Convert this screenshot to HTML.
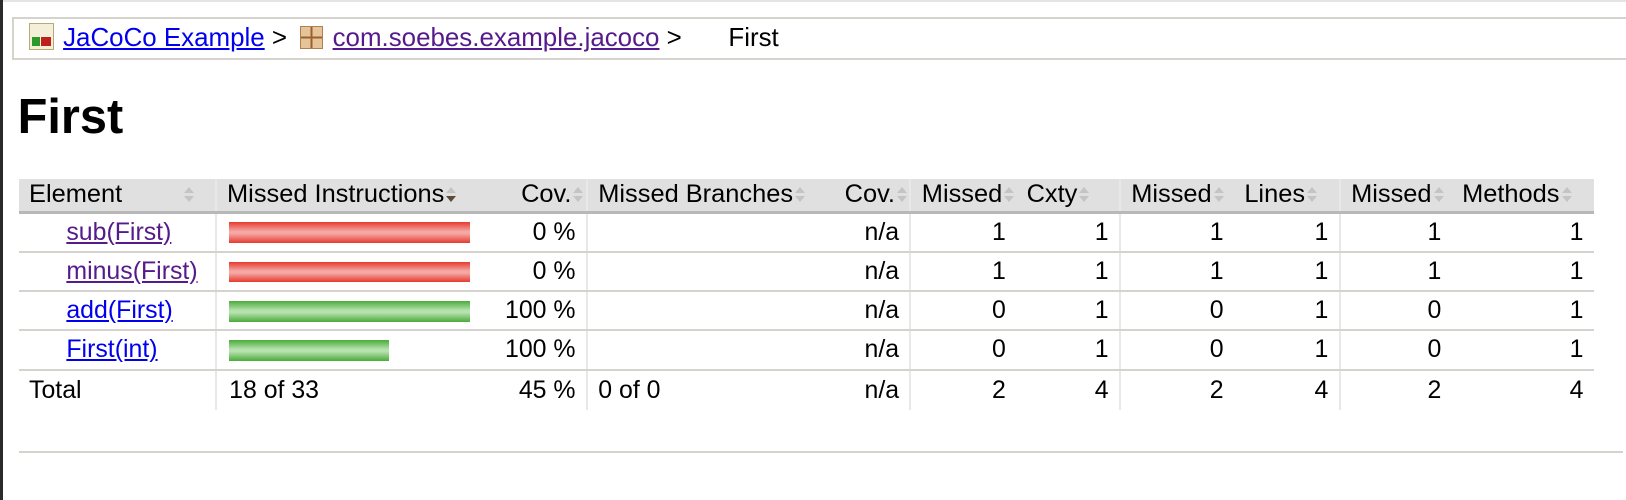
<!DOCTYPE html>
<html><head><style>
body{margin:0;width:1626px;height:500px;overflow:hidden;background:#fff;font-family:"Liberation Sans",Arial,sans-serif;position:relative}
.lb{position:absolute;left:0;top:0;width:3px;height:500px;background:#2b2b2b;z-index:2}
.tb{position:absolute;left:3px;top:0;width:1623px;height:2px;background:#e4e4e4}
.wrap{position:absolute;left:0;top:0;width:1568px;height:482px;zoom:1.037}
.bc{position:absolute;left:12px;top:16px;width:1640px;height:38px;border:2px solid #d6d3ce;border-right:none;font-size:25px;line-height:38px;color:#000;white-space:nowrap}
.bc a{color:#00e}
.bc a.v{color:#551a8b}
h1{position:absolute;left:17px;top:86px;margin:0;font-size:47px;font-weight:bold}
table{position:absolute;left:18px;top:173px;border-collapse:collapse;font-size:24px;width:1519px;table-layout:fixed}
th{background:#e0e0e0;font-weight:normal;height:30px;border-bottom:3px solid #b8b8b8;padding:0 2px 0 10px;white-space:nowrap;overflow:hidden;font-size:24.5px}
td{height:36px;border-bottom:2px solid #d6d3ce;padding:0 10px;white-space:nowrap;line-height:36px}
tr.t td{border-bottom:none;height:38px}
.r{text-align:right}.l{text-align:left}
.s{border-left:2px solid #e8e8e8}
.i{display:inline-block;width:10px;height:16px;vertical-align:-1px;margin-left:2px;position:relative}
.i:before{content:"";position:absolute;left:0;top:0;border:5px solid transparent;border-bottom:6px solid #c4c4c4;border-top:0}
.i:after{content:"";position:absolute;left:0;top:9px;border:5px solid transparent;border-top:6px solid #c4c4c4;border-bottom:0}
.i.d:after{border-top-color:#5b4a3c}
td a{color:#00e}td a.v{color:#551a8b}
.bar{height:20px;display:block;margin-top:1px}
.red{background:linear-gradient(#e53a2e,#f5a8a4 45%,#f5a8a4 55%,#e53a2e)}
.grn{background:linear-gradient(#4aaa3a,#b7e2ae 45%,#b7e2ae 55%,#4aaa3a)}
.hr{position:absolute;left:18px;top:435px;width:1547px;height:2px;background:#d6d3ce}
</style></head><body>
<div class="lb"></div><div class="tb"></div>
<div class="wrap">
<div class="bc"><span style="display:inline-block;width:22px;height:24px;margin:0 9px 0 14px;vertical-align:-4px;position:relative;background:#f3efd8;border:1px solid #b9a878"><span style="position:absolute;left:2px;top:13px;width:8px;height:8px;background:#2a9a2a"></span><span style="position:absolute;left:11px;top:13px;width:9px;height:8px;background:#c0201c"></span></span><a href="#">JaCoCo Example</a> &gt; <span style="display:inline-block;width:22px;height:22px;margin:0 9px 0 6px;vertical-align:-3px;background:#e6c49a;border:1px solid #b08050;box-sizing:border-box;background-image:linear-gradient(90deg,transparent 9px,#9a6030 9px,#9a6030 11px,transparent 11px),linear-gradient(transparent 9px,#9a6030 9px,#9a6030 11px,transparent 11px)"></span><a class="v" href="#">com.soebes.example.jacoco</a> &gt; <span style="margin-left:38px">First</span></div>
<h1>First</h1>
<table>
<colgroup><col style="width:190px"><col style="width:248px"><col style="width:110px"><col style="width:224px"><col style="width:88px"><col style="width:102px"><col style="width:100px"><col style="width:110px"><col style="width:102px"><col style="width:108px"><col></colgroup>
<tr><th class="l">Element<span class="i" style="margin-left:60px"></span></th><th class="l s">Missed Instructions<span class="i d"></span></th><th class="r">Cov.<span class="i"></span></th><th class="l s">Missed Branches<span class="i"></span></th><th class="r">Cov.<span class="i"></span></th><th class="l s">Missed<span class="i"></span></th><th class="l">Cxty<span class="i"></span></th><th class="l s">Missed<span class="i"></span></th><th class="l">Lines<span class="i"></span></th><th class="l s">Missed<span class="i"></span></th><th class="l">Methods<span class="i"></span></th></tr>
<tr><td style="padding-left:46px"><a class="v" href="#">sub(First)</a></td><td class="s" style="padding-left:12px"><span class="bar red" style="width:232px"></span></td><td class="r">0 %</td><td class="s"></td><td class="r">n/a</td><td class="r s">1</td><td class="r">1</td><td class="r s">1</td><td class="r">1</td><td class="r s">1</td><td class="r">1</td></tr>
<tr><td style="padding-left:46px"><a class="v" href="#">minus(First)</a></td><td class="s" style="padding-left:12px"><span class="bar red" style="width:232px"></span></td><td class="r">0 %</td><td class="s"></td><td class="r">n/a</td><td class="r s">1</td><td class="r">1</td><td class="r s">1</td><td class="r">1</td><td class="r s">1</td><td class="r">1</td></tr>
<tr><td style="padding-left:46px"><a href="#">add(First)</a></td><td class="s" style="padding-left:12px"><span class="bar grn" style="width:232px"></span></td><td class="r">100 %</td><td class="s"></td><td class="r">n/a</td><td class="r s">0</td><td class="r">1</td><td class="r s">0</td><td class="r">1</td><td class="r s">0</td><td class="r">1</td></tr>
<tr><td style="padding-left:46px"><a href="#">First(int)</a></td><td class="s" style="padding-left:12px"><span class="bar grn" style="width:154px"></span></td><td class="r">100 %</td><td class="s"></td><td class="r">n/a</td><td class="r s">0</td><td class="r">1</td><td class="r s">0</td><td class="r">1</td><td class="r s">0</td><td class="r">1</td></tr>
<tr class="t"><td>Total</td><td class="s" style="padding-left:12px">18 of 33</td><td class="r">45 %</td><td class="s">0 of 0</td><td class="r">n/a</td><td class="r s">2</td><td class="r">4</td><td class="r s">2</td><td class="r">4</td><td class="r s">2</td><td class="r">4</td></tr>
</table>
<div class="hr"></div>
</div>
</body></html>
